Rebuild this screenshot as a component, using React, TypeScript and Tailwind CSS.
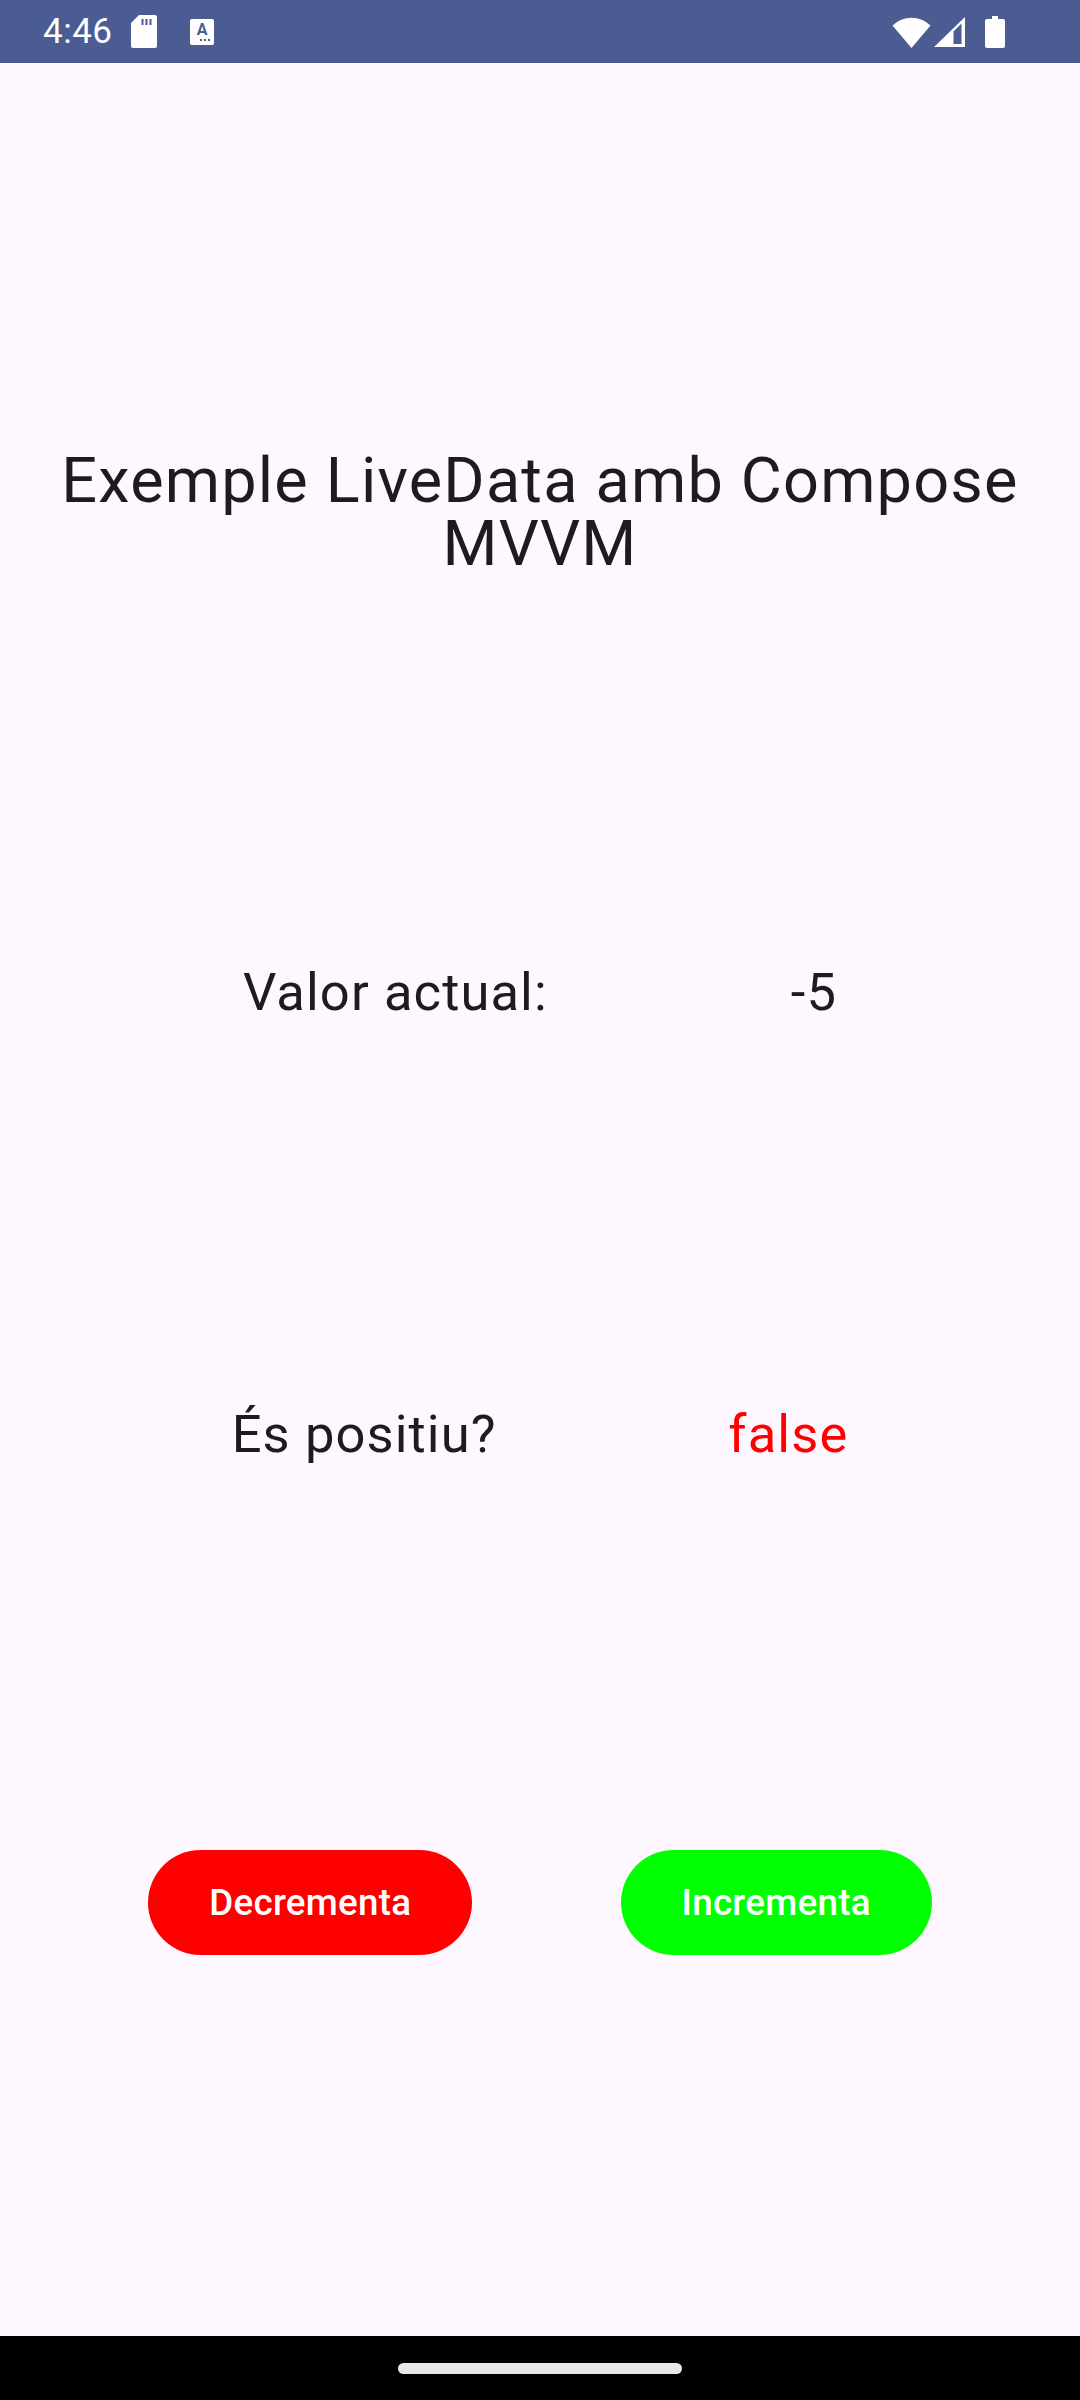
import React, { useState } from "react";

const StatusBar = () => {
  return (
    <div className="h-[63px] w-full bg-[#4a5c92] flex items-center justify-between pl-[43px] pr-[75px] shrink-0">
      <div className="flex items-center">
        <span className="text-white text-[35px] leading-none tracking-[0.5px] w-[88px]">4:46</span>
        {/* tarjeta SD */}
        <svg width="26" height="33" viewBox="0 0 26 33" className="mt-[-1px]">
          <path d="M8 0H24a2 2 0 0 1 2 2V31a2 2 0 0 1-2 2H2a2 2 0 0 1-2-2V8Z" fill="#fff" />
          <rect x="10.5" y="4" width="2" height="6" fill="#4a5c92" />
          <rect x="14.5" y="4" width="2" height="6" fill="#4a5c92" />
          <rect x="18.5" y="4" width="2" height="6" fill="#4a5c92" />
        </svg>
        {/* icona A */}
        <div className="ml-[33px] w-[24px] h-[26px] bg-white rounded-[2px] flex flex-col items-center justify-start pt-[3px]">
          <span className="text-[#4a5c92] text-[16px] leading-[16px] font-bold">A</span>
          <div className="flex gap-[2px] mt-[1px] ml-[6px]">
            <span className="w-[2px] h-[2px] bg-[#4a5c92]" />
            <span className="w-[2px] h-[2px] bg-[#4a5c92]" />
            <span className="w-[2px] h-[2px] bg-[#4a5c92]" />
          </div>
        </div>
      </div>
      <div className="flex items-center">
        {/* wifi */}
        <svg width="39" height="32" viewBox="0 0 39 32">
          <path d="M19.5 32L0.5 9.5A27 27 0 0 1 38.5 9.5Z" fill="#fff" />
        </svg>
        {/* senyal */}
        <svg width="31" height="30" viewBox="0 0 31 30" className="ml-[3px]">
          <path d="M31 0V30H0Z" fill="#fff" />
          <path d="M19.5 14.5L27.5 6.5V27H19.5Z" fill="#4a5c92" />
        </svg>
        {/* bateria */}
        <svg width="20" height="32" viewBox="0 0 20 32" className="ml-[20px]">
          <rect x="7" y="0" width="6" height="4" fill="#fff" />
          <rect x="0" y="3" width="20" height="29" rx="2" fill="#fff" />
        </svg>
      </div>
    </div>
  );
};

export default function App() {
  const [valor, setValor] = useState(-5);
  const positiu = valor > 0;

  return (
    <div className="w-[1080px] h-[2400px] flex flex-col bg-[#fef7ff] font-['Roboto',sans-serif] text-[#1d1b20]">
      <StatusBar />

      <div className="flex-1 flex flex-col items-center">
        <h1 className="mt-[386px] text-[63px] leading-[63px] tracking-[1.2px] text-center font-normal px-[20px]">
          Exemple LiveData amb Compose MVVM
        </h1>

        <div className="mt-[380px] w-full flex justify-evenly">
          <span className="text-[52.5px] leading-[74px] tracking-[1.1px]">Valor actual:</span>
          <span className="text-[52.5px] leading-[74px] tracking-[1.1px]">{valor}</span>
        </div>

        <div className="mt-[368px] w-full flex justify-evenly">
          <span className="text-[52.5px] leading-[74px] tracking-[1.1px]">És positiu?</span>
          <span
            className={
              positiu
                ? "text-[52.5px] leading-[74px] tracking-[1.1px] text-[#00ff00]"
                : "text-[52.5px] leading-[74px] tracking-[1.1px] text-[#ff0000]"
            }
          >
            {positiu ? "true" : "false"}
          </span>
        </div>

        <div className="mt-[379px] w-full flex justify-evenly">
          <button
            onClick={() => setValor(valor - 1)}
            className="h-[105px] px-[61px] rounded-full bg-[#ff0000] text-white text-[36.75px] font-medium tracking-[0.26px]"
          >
            Decrementa
          </button>
          <button
            onClick={() => setValor(valor + 1)}
            className="h-[105px] px-[61px] rounded-full bg-[#00ff00] text-white text-[36.75px] font-medium tracking-[0.26px]"
          >
            Incrementa
          </button>
        </div>
      </div>

      {/* barra de navegació */}
      <div className="h-[64px] w-full bg-black flex items-center justify-center shrink-0">
        <div className="w-[284px] h-[11px] rounded-full bg-[#e8e8e8]" />
      </div>
    </div>
  );
}
